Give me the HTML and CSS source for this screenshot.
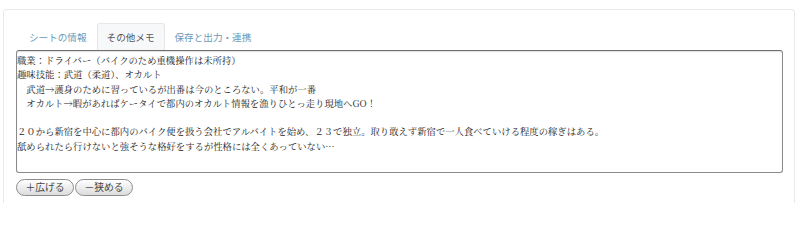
FILE: index.html
```html
<!DOCTYPE html>
<html lang="ja">
<head>
<meta charset="utf-8">
<title>その他メモ</title>
<link rel="stylesheet" href="styles.css">
</head>
<body>
<div class="panel">
  <ul class="tabs">
    <li class="tab">シートの情報</li>
    <li class="tab active">その他メモ</li>
    <li class="tab">保存と出力・連携</li>
  </ul>
  <textarea class="memo" readonly>職業：ドライバー（バイクのため重機操作は未所持）
趣味技能：武道（柔道）、オカルト
　武道→護身のために習っているが出番は今のところない。平和が一番
　オカルト→暇があればケータイで都内のオカルト情報を漁りひとっ走り現地へGO！

２０から新宿を中心に都内のバイク便を扱う会社でアルバイトを始め、２３で独立。取り敢えず新宿で一人食べていける程度の稼ぎはある。
舐められたら行けないと強そうな格好をするが性格には全くあっていない…</textarea>
  <div class="buttons">
    <button class="btn" type="button">＋広げる</button>
    <button class="btn" type="button">－狭める</button>
  </div>
</div>
</body>
</html>
```
FILE: styles.css
```css
html, body {
  margin: 0;
  padding: 0;
  background: #ffffff;
}

body {
  font-family: "Noto Sans CJK JP", "Noto Sans", sans-serif;
  height: 203px;
  overflow: hidden;
}

.panel {
  margin: 9px 5px 0 3px;
  border: 1px solid #e9e9e9;
  border-bottom: none;
  border-radius: 4px 4px 0 0;
  padding: 13px 11px 30px 12px;
  height: 200px;
  box-sizing: border-box;
}

.tabs {
  list-style: none;
  margin: 0;
  padding: 0 0 0 3px;
  display: flex;
}

.tab {
  height: 27px;
  line-height: 27px;
  padding: 0 9px;
  font-size: 9.6px;
  color: #6a9ab9;
  border: 1px solid transparent;
  border-bottom: none;
  border-radius: 3px 3px 0 0;
  box-sizing: border-box;
}

.tab.active {
  color: #555555;
  background: #f7f8f9;
  border-color: #e6e6e6;
}

.memo {
  display: block;
  width: 100%;
  height: 123px;
  box-sizing: border-box;
  margin: 0;
  padding: 2px 0 0 0;
  border: 1px solid #8a8a8a;
  border-top-color: #6e6e6e;
  border-radius: 3px;
  box-shadow: inset 0 1px 1px rgba(0, 0, 0, 0.12);
  font-family: "Noto Serif CJK JP", "Noto Sans CJK JP", serif;
  font-size: 9.35px;
  line-height: 14.3px;
  color: #1a1a1a;
  background: #ffffff;
  resize: none;
  overflow: hidden;
  outline: none;
}

.buttons {
  display: flex;
  gap: 1px;
  margin-top: 6px;
}

.btn {
  height: 17px;
  width: 58px;
  padding: 0;
  margin: 0;
  border: 1px solid #8c8c8c;
  border-radius: 9px;
  background: linear-gradient(#ffffff, #dcdcdc);
  font-family: "Noto Sans CJK JP", "Noto Sans", sans-serif;
  font-size: 9.8px;
  line-height: 15px;
  color: #444444;
  cursor: pointer;
}
```
